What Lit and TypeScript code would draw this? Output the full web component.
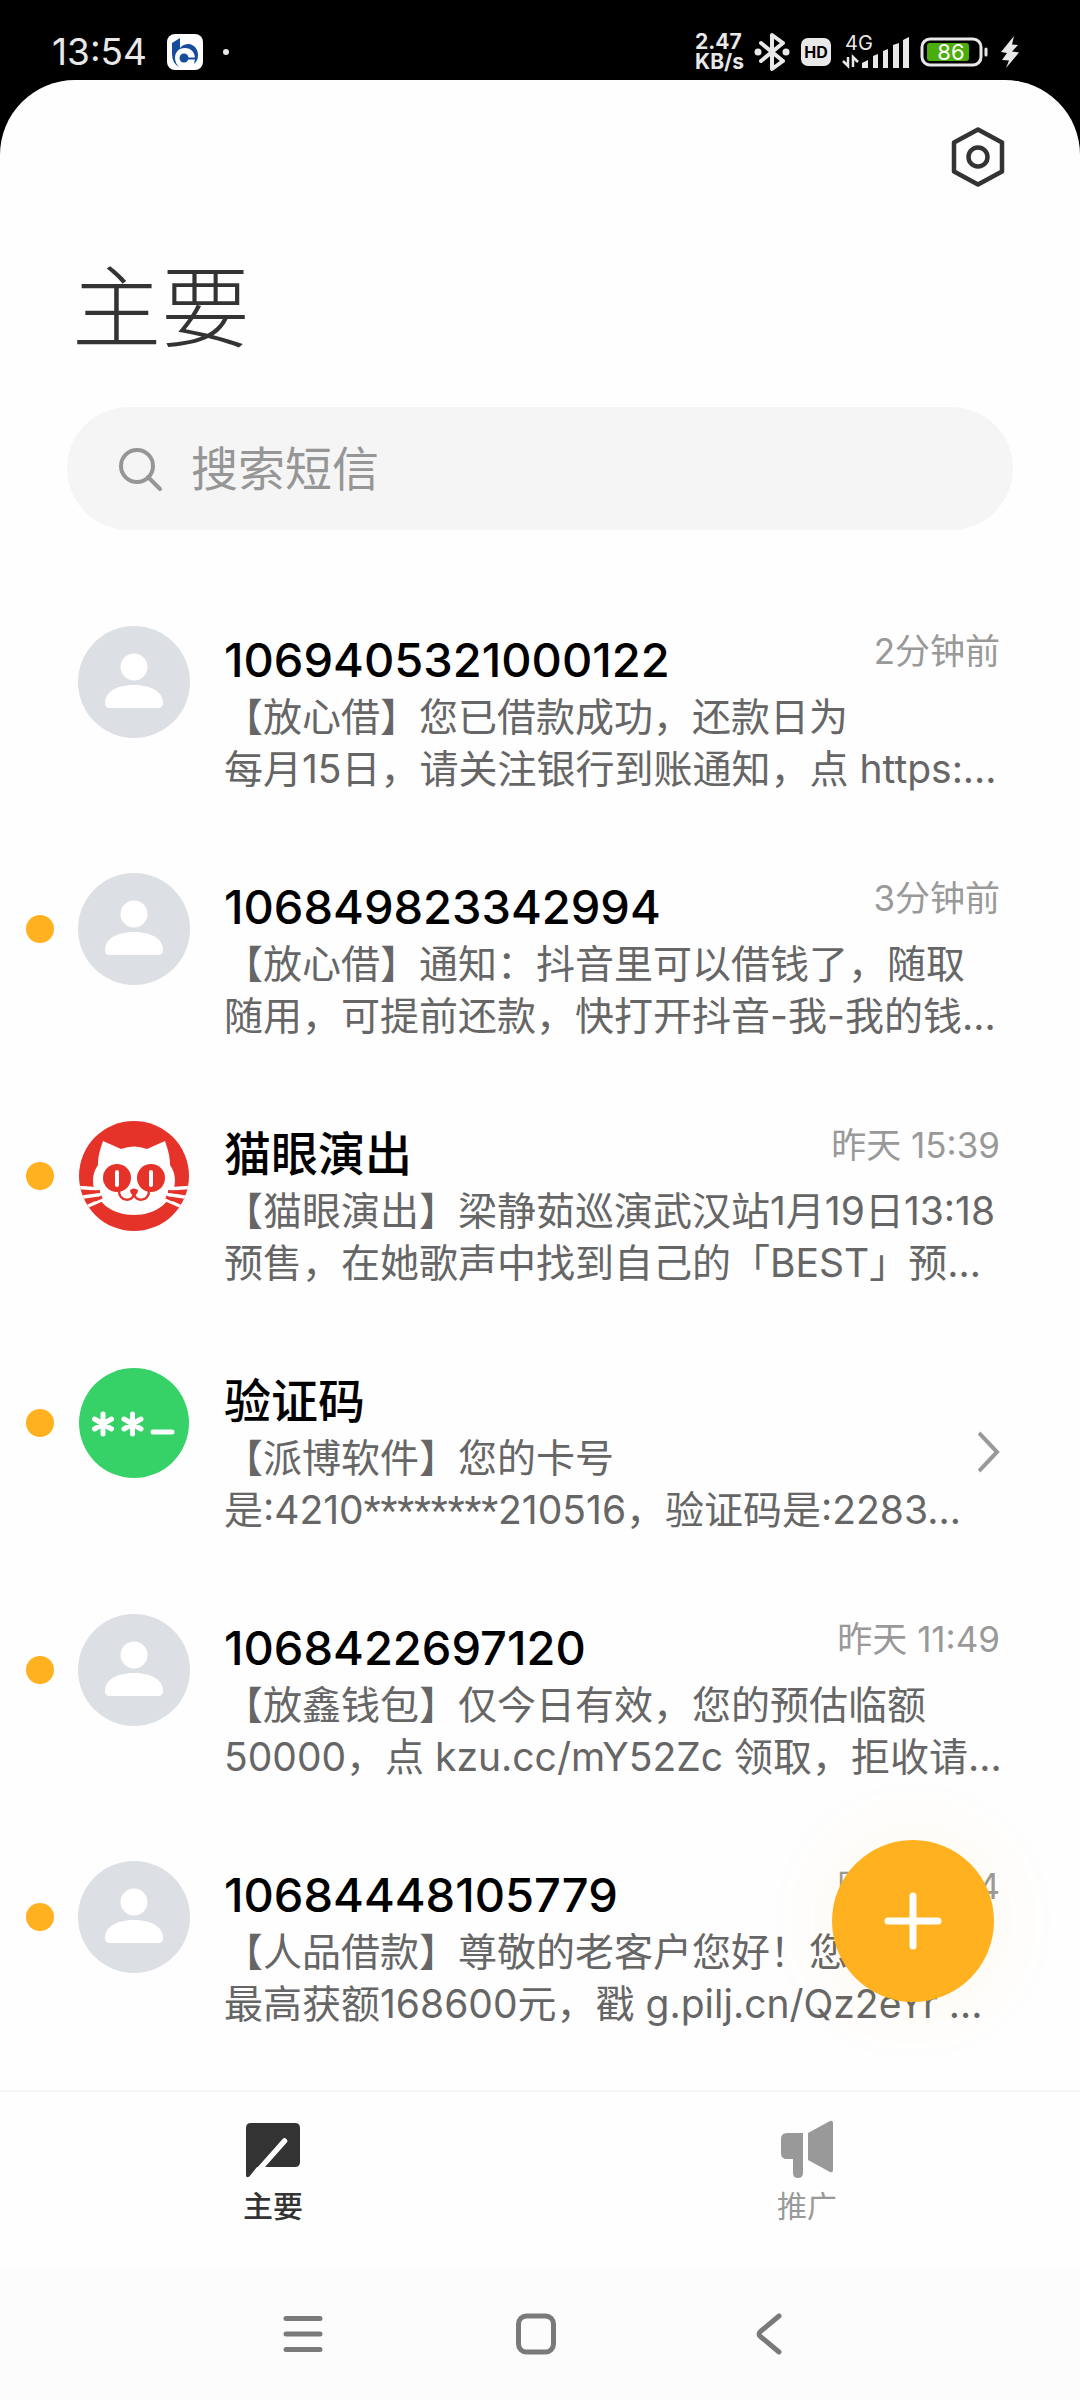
import { LitElement, html, svg, css, nothing } from "lit";
import type { TemplateResult } from "lit";
import { customElement, property } from "lit/decorators.js";

type AvatarKind = "person" | "cat" | "code";

interface Thread {
  name: string;
  avatar: AvatarKind;
  unread: boolean;
  time: string;
  lines: [string, string];
}

const threads: Thread[] = [
  { name: "1069405321000122", avatar: "person", unread: false, time: "2分钟前", lines: ["【放心借】您已借款成功，还款日为", "每月15日，请关注银行到账通知，点 https:…"] },
  { name: "106849823342994", avatar: "person", unread: true, time: "3分钟前", lines: ["【放心借】通知：抖音里可以借钱了，随取", "随用，可提前还款，快打开抖音-我-我的钱…"] },
  { name: "猫眼演出", avatar: "cat", unread: true, time: "昨天 15:39", lines: ["【猫眼演出】梁静茹巡演武汉站1月19日13:18", "预售，在她歌声中找到自己的「BEST」预…"] },
  { name: "验证码", avatar: "code", unread: true, time: "", lines: ["【派博软件】您的卡号", "是:4210********210516，验证码是:2283…"] },
  { name: "1068422697120", avatar: "person", unread: true, time: "昨天 11:49", lines: ["【放鑫钱包】仅今日有效，您的预估临额", "50000，点 kzu.cc/mY52Zc 领取，拒收请…"] },
  { name: "10684448105779", avatar: "person", unread: true, time: "昨天 11:34", lines: ["【人品借款】尊敬的老客户您好！您的", "最高获额168600元，戳 g.pilj.cn/Qz2eYr …"] },
];

const avatars = {
  person: svg`
    <circle cx="56" cy="56" r="56" fill="#dcdfe4"/>
    <circle cx="56" cy="41" r="13.500" fill="#fff"/>
    <path d="M27 77c0-12 13-18 29-18s29 6 29 18c0 3-1.500 5-5 5H32c-3.500 0-5-2-5-5z" fill="#fff"/>`,
  cat: svg`
    <defs><clipPath id="disc"><circle cx="56" cy="56" r="55"/></clipPath></defs>
    <circle cx="56" cy="56" r="55" fill="#e5332a"/>
    <g clip-path="url(#disc)">
      <path d="M0 67.500L22 69M2 77.500L22 74.500M8 87L26 79M112 67.500L90 69M110 77.500L90 74.500M104 87L86 79" fill="none" stroke="#fff" stroke-width="3.500"/>
      <path d="M25 21L43 29Q56 24 69 29L87 21C90 30 92 36 92 45C97 52 98 60 96 68C92 84 76 95 56 95S20 84 16 68C14 60 15 52 20 45C20 36 22 30 25 21z" fill="#fff"/>
      <path d="M14 72L22 71.500M17 80L24 77M98 72L90 71.500M95 80L88 77" stroke="#e5332a" stroke-width="3"/>
    </g>
    <circle cx="39" cy="58" r="14" fill="#e5332a"/>
    <circle cx="73" cy="58" r="14" fill="#e5332a"/>
    <path d="M39 52v13M73 52v13" stroke="#fff" stroke-width="4" stroke-linecap="round"/>
    <path d="M52 70q4-3 8 0q0 4-4 6q-4-2-4-6z" fill="#e5332a"/>
    <path d="M56 74c-1 8-15 8-15-3M56 74c1 8 15 8 15-3" fill="none" stroke="#e5332a" stroke-width="2.500"/>`,
  code: svg`
    <circle cx="56" cy="56" r="55" fill="#37d267"/>
    <path d="M25 47v20M16.500 52l17 10M33.500 52l-17 10M54.500 47v20M46 52l17 10M63 52l-17 10M75 65h19" stroke="#fff" stroke-width="5" stroke-linecap="round"/>`,
};

/** Sets runs of asterisks in their own face, so that masked digits stay narrow. */
function withMask(line: string): (string | TemplateResult)[] {
  return line.split(/(\*+)/).map((part) => (part.startsWith("*") ? html`<span class="mask">${part}</span>` : part));
}

@customElement("status-bar")
class StatusBar extends LitElement {
  static styles = css`
    :host { display: flex; align-items: center; justify-content: space-between; height: 80px; padding: 24px 60px 0 52px; box-sizing: border-box; background: #000; color: #e8e8e8; }
    .side { display: flex; align-items: center; }
    .left { gap: 20px; }
    .right { gap: 10px; }
    .clock { font-size: 37px; line-height: 44px; }
    .rate { font-size: 21px; line-height: 20px; font-weight: 700; }
    .rate span { display: block; }
    svg { display: block; }
  `;
  render() {
    return html`
      <div class="side left">
        <span class="clock">13:54</span>
        <svg width="36" height="36" viewBox="0 0 36 36" aria-hidden="true">
          <rect width="36" height="36" rx="8" fill="#fff"/>
          <path d="M5 9L13 4V14Q16 10 22 10C28 11 31 16 31 21Q31 27 27 30L28 25C28 18 24 14 18 14C11 14 8 19 8 24Q8 29 12 33Q5 29 5 20z" fill="#164c9c"/>
          <circle cx="17" cy="24" r="4.500" fill="#164c9c"/><path d="M18 23.500h11v2H18z" fill="#164c9c"/>
        </svg>
        <svg width="6" height="6" viewBox="0 0 6 6" aria-hidden="true"><circle cx="3" cy="3" r="3" fill="#e8e8e8"/></svg>
      </div>
      <div class="side right">
        <span class="rate"><span>2.47</span><span>KB/s</span></span>
        <svg width="36" height="40" viewBox="0 0 36 40" aria-hidden="true">
          <path d="M7 11L29 29 18 37V3L29 11 7 29" fill="none" stroke="#e8e8e8" stroke-width="4" stroke-linejoin="round" stroke-linecap="round"/>
          <circle cx="4" cy="20" r="3.500" fill="#e8e8e8"/><circle cx="32" cy="20" r="3.500" fill="#e8e8e8"/>
        </svg>
        <svg width="32" height="30" viewBox="0 0 32 30" role="img" aria-label="HD">
          <rect x="1" y="1" width="30" height="28" rx="7" fill="#e8e8e8"/>
          <text x="16" y="21" text-anchor="middle" font-size="16" font-weight="700" fill="#000">HD</text>
        </svg>
        <svg width="68" height="46" viewBox="0 -6 68 46" role="img" aria-label="4G">
          <text x="3" y="15" font-size="20" fill="#e8e8e8">4G</text>
          <path d="M1 26l5 5V22M11 32V22l5 5" fill="none" stroke="#e8e8e8" stroke-width="2.500"/>
          <path d="M20 33v-5l6-3v8zM31 33V21l5-2v14zM41 33V16l5-2v19zM51 33V10l6-2v25zM61 33V5l6-3v31z" fill="#e8e8e8"/>
        </svg>
        <svg width="70" height="30" viewBox="0 0 70 30" role="img" aria-label="86%">
          <rect x="2" y="2" width="59" height="26" rx="8" fill="none" stroke="#e8e8e8" stroke-width="3"/>
          <rect x="7" y="6" width="42" height="18" rx="3" fill="#4bad0a"/>
          <path d="M66 12v6" stroke="#e8e8e8" stroke-width="3" stroke-linecap="round"/>
          <text x="31" y="23" text-anchor="middle" font-size="22" fill="#fff">86</text>
        </svg>
        <svg width="20" height="32" viewBox="0 0 20 32" aria-hidden="true">
          <path d="M14 0L1 16 7 17 2 24 9 24.500 6 32 19 16.500 12 15.500 18 9 12 8.500z" fill="#e8e8e8"/>
        </svg>
      </div>`;
  }
}

@customElement("thread-row")
class ThreadRow extends LitElement {
  @property({ attribute: false }) thread!: Thread;
  static styles = css`
    :host { display: block; }
    .row { display: flex; align-items: flex-start; height: 247px; padding: 38px 80px 0 26px; box-sizing: border-box; color: inherit; text-decoration: none; }
    .dot { width: 28px; height: 28px; margin: 42px 24px 0 0; border-radius: 50%; flex: none; }
    .unread { background: #ffb11f; }
    .avatar { width: 112px; height: 112px; flex: none; margin-right: 34px; }
    .text { flex: 1; min-width: 0; padding-top: 3px; }
    .head { display: flex; align-items: flex-start; justify-content: space-between; }
    .name { margin: 0; font-size: 47px; line-height: 62px; font-weight: 500; color: #000; white-space: nowrap; }
    .time { font-size: 35px; line-height: 44px; color: #999; white-space: nowrap; }
    .line { display: block; font-size: 39px; line-height: 52px; color: #666; white-space: nowrap; }
    .mask { font-family: Roboto, sans-serif; }
    .go { flex: none; align-self: flex-start; margin: 63px 0 0 0; }
  `;
  render() {
    const t = this.thread;
    return html`<a class="row" href="#thread">
      <span class="dot ${t.unread ? "unread" : ""}"></span>
      <svg class="avatar" viewBox="0 0 112 112" aria-hidden="true">${avatars[t.avatar]}</svg>
      <div class="text">
        <div class="head"><h2 class="name">${t.name}</h2>${t.time ? html`<span class="time">${t.time}</span>` : nothing}</div>
        ${t.lines.map((l) => html`<span class="line">${withMask(l)}</span>`)}
      </div>
      ${t.time ? nothing : html`<svg class="go" width="22" height="44" viewBox="0 0 22 44" aria-hidden="true"><path d="M1 3L19 22 1 41" fill="none" stroke="#999" stroke-width="4"/></svg>`}
    </a>`;
  }
}

@customElement("app-root")
class AppRoot extends LitElement {
  static styles = css`
    :host { display: block; background: #000; font-family: Inter, "Noto Sans CJK SC", sans-serif; }
    .page { display: flex; flex-direction: column; min-height: calc(100vh - 80px); border-radius: 75px 75px 0 0; background: #fefefe; overflow: hidden; }
    button { border: 0; padding: 0; background: none; font: inherit; color: inherit; }
    svg { display: block; }
    .tools { display: flex; justify-content: flex-end; padding: 46px 72px 0; }
    .title { margin: 57px 0 0; padding: 0 72px; font-size: 89px; line-height: 126px; font-weight: 300; color: #333; }
    .search { display: flex; align-items: center; gap: 28px; height: 123px; margin: 36px 67px 58px; padding: 0 50px; border-radius: 62px; background: #f5f5f5; }
    .search svg { flex: none; }
    .field { flex: 1; min-width: 0; border: 0; padding: 0; outline: 0; background: none; font: inherit; font-size: 47px; line-height: 60px; color: #333; }
    .field::placeholder { color: #969696; opacity: 1; }
    .list { position: relative; flex: 1; }
    .threads { margin: 0; padding: 0 0 20px; list-style: none; }
    .fab { position: absolute; right: 86px; bottom: 88px; width: 162px; height: 162px; border-radius: 50%; background: #ffb11f; box-shadow: 0 0 80px rgba(255, 177, 31, 0.08); display: grid; place-items: center; }
    .tabs { display: grid; grid-template-columns: 1fr 1fr; height: 179px; padding: 28px 6px 0; box-sizing: border-box; border-top: 2px solid #f7f7f7; }
    .tab { display: flex; flex-direction: column; align-items: center; gap: 6px; font-size: 30px; line-height: 40px; color: #999; }
    .active { color: #333; font-weight: 500; }
    .system { display: grid; grid-template-columns: repeat(3, 1fr); height: 131px; padding: 0 194px 2px 186px; box-sizing: border-box; background: #fcfcfc; }
    .system button { display: grid; place-items: center; }
  `;
  render() {
    return html`
      <status-bar></status-bar>
      <main class="page">
        <div class="tools">
          <button aria-label="设置">
            <svg width="60" height="62" viewBox="0 0 60 62"><path d="M30 3.500L54 16.500V45.500L30 58.500 6 45.500V16.500z" fill="none" stroke="#333" stroke-width="4.500" stroke-linejoin="round"/><circle cx="30" cy="31" r="9.500" fill="none" stroke="#333" stroke-width="4.500"/></svg>
          </button>
        </div>
        <h1 class="title">主要</h1>
        <label class="search">
          <svg width="46" height="46" viewBox="0 0 46 46" aria-hidden="true"><circle cx="20" cy="20" r="16" fill="none" stroke="#969696" stroke-width="4"/><path d="M31 31L43 43" stroke="#969696" stroke-width="4" stroke-linecap="round"/></svg>
          <input class="field" type="text" placeholder="搜索短信" aria-label="搜索短信">
        </label>
        <section class="list">
          <ul class="threads">${threads.map((t) => html`<li><thread-row .thread=${t}></thread-row></li>`)}</ul>
          <button class="fab" aria-label="新建短信">
            <svg width="60" height="60" viewBox="0 0 60 60"><path d="M30 5v50M5 30h50" stroke="#fff" stroke-width="7" stroke-linecap="round"/></svg>
          </button>
        </section>
        <nav class="tabs">
          <button class="tab active">
            <svg width="60" height="60" viewBox="0 0 60 60"><path d="M8 3H52q5 0 5 5V42q0 5-5 5H14L7 56q-4 3-4-1V8q0-5 5-5z" fill="#333"/><path d="M41.500 21L10 56.500" stroke="#fefefe" stroke-width="5.500" stroke-linecap="round"/></svg>
            主要
          </button>
          <button class="tab">
            <svg width="60" height="60" viewBox="0 0 60 60"><path d="M10 13H26V53q0 5-5 5t-5-5V39H10q-6 0-6-6V19q0-6 6-6zM31 13L53 1q3-1 3 2V50q0 3-3 2L31 40z" fill="#999"/></svg>
            推广
          </button>
        </nav>
        <nav class="system">
          <button aria-label="最近任务"><svg width="44" height="44" viewBox="0 0 44 44"><path d="M5 6.500h34M5 22h34M5 37.500h34" stroke="#7a7a7a" stroke-width="5" stroke-linecap="round"/></svg></button>
          <button aria-label="主屏幕"><svg width="44" height="44" viewBox="0 0 44 44"><rect x="4.500" y="4" width="35" height="36" rx="8" fill="none" stroke="#7a7a7a" stroke-width="5"/></svg></button>
          <button aria-label="返回"><svg width="44" height="44" viewBox="0 0 44 44"><path d="M32 4L14 19q-4 3 0 6L32 40" fill="none" stroke="#7a7a7a" stroke-width="5" stroke-linecap="round"/></svg></button>
        </nav>
      </main>`;
  }
}
